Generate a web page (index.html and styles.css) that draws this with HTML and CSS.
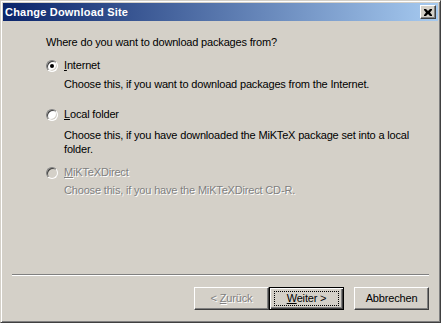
FILE: index.html
```html
<!DOCTYPE html>
<html lang="en">
<head>
    <meta charset="UTF-8">
    <title>Change Download Site</title>
    <link rel="stylesheet" href="styles.css">
</head>
<body>
<div class="window">
    <div class="titlebar">
        <span class="title">Change Download Site</span>
        <span class="close-btn">
            <svg width="8" height="7" viewBox="0 0 8 7">
                <path d="M0 0h2l2 2 2-2h2v1l-2 2.5 2 2.5v1h-2l-2-2-2 2h-2v-1l2-2.5-2-2.5z" fill="#000"/>
            </svg>
        </span>
    </div>

    <div class="content">
        <p class="question">Where do you want to download packages from?</p>

        <div class="option opt-internet">
            <div class="option-row">
                <span class="radio checked"></span>
                <span class="label"><u>I</u>nternet</span>
            </div>
            <p class="desc">Choose this, if you want to download packages from the Internet.</p>
        </div>

        <div class="option opt-local">
            <div class="option-row">
                <span class="radio"></span>
                <span class="label"><u>L</u>ocal folder</span>
            </div>
            <p class="desc">Choose this, if you have downloaded the MiKTeX package set into a local folder.</p>
        </div>

        <div class="option opt-direct disabled">
            <div class="option-row">
                <span class="radio"></span>
                <span class="label"><u>M</u>iKTeXDirect</span>
            </div>
            <p class="desc">Choose this, if you have the MiKTeXDirect CD-R.</p>
        </div>
    </div>

    <div class="footer">
        <div class="separator"></div>
        <div class="buttons">
            <span class="btn disabled"><span>&lt; <u>Z</u>urück</span></span>
            <span class="btn default"><span class="focus"><span><u>W</u>eiter &gt;</span></span></span>
            <span class="btn cancel">Abbrechen</span>
        </div>
    </div>
</div>
</body>
</html>
```

FILE: styles.css
```css
body, html {
    margin: 0;
    padding: 0;
    background: #d4d0c8;
}

.window {
    width: 441px;
    height: 323px;
    box-sizing: border-box;
    display: flex;
    flex-direction: column;
    background: #d4d0c8;
    border: 1px solid;
    border-color: #d4d0c8 #404040 #404040 #d4d0c8;
    box-shadow: inset 1px 1px #fff, inset -1px -1px #808080;
    padding: 2px;
    font-family: "Liberation Sans", Arial, sans-serif;
    font-size: 11px;
    line-height: 13px;
    letter-spacing: -0.17px;
    color: #000;
}

.titlebar {
    height: 18px;
    display: flex;
    align-items: center;
    justify-content: space-between;
    padding: 0 2px 0 2px;
    background: linear-gradient(to right, #0a246a, #a6caf0);
}

.title {
    color: #fff;
    font-weight: bold;
    font-size: 11px;
    letter-spacing: 0.2px;
}

.close-btn {
    width: 16px;
    height: 14px;
    box-sizing: border-box;
    display: flex;
    align-items: center;
    justify-content: center;
    background: #d4d0c8;
    border: 1px solid;
    border-color: #fff #404040 #404040 #fff;
    box-shadow: inset -1px -1px #808080;
}

.content {
    flex: 1;
    padding: 15px 0 0 43px;
}

.question {
    margin: 0 0 10px;
}

.option-row {
    display: flex;
    align-items: center;
    height: 13px;
}

.radio {
    width: 12px;
    height: 12px;
    box-sizing: border-box;
    border-radius: 50%;
    border: 1px solid;
    border-color: #808080 #fff #fff #808080;
    box-shadow: inset 1px 1px #404040, inset -1px -1px #d4d0c8;
    background: #fff;
    display: flex;
    align-items: center;
    justify-content: center;
    margin-right: 6px;
}

.radio.checked::after {
    content: "";
    width: 4px;
    height: 4px;
    border-radius: 50%;
    background: #000;
}

.label u, .btn u {
    text-decoration-thickness: 1px;
    text-underline-offset: 1px;
}

.desc {
    margin: 6px 0 0 18px;
    width: 360px;
}

.opt-internet { margin-bottom: 17px; }
.opt-local { margin-bottom: 10px; }
.opt-local .desc { margin-top: 7px; line-height: 14px; }
.opt-direct .desc { margin-top: 5px; }

.disabled .radio {
    background: #d4d0c8;
}

.disabled .label,
.disabled .desc,
.btn.disabled {
    color: #808080;
    text-shadow: 1px 1px #fff;
}

.footer {
    padding: 0 9px 10px 9px;
}

.separator {
    height: 1px;
    border-top: 1px solid #808080;
    background: #fff;
    margin-bottom: 11px;
}

.buttons {
    display: flex;
    justify-content: flex-end;
}

.btn {
    width: 75px;
    height: 23px;
    box-sizing: border-box;
    display: flex;
    align-items: center;
    justify-content: center;
    border: 1px solid;
    border-color: #fff #404040 #404040 #fff;
    box-shadow: inset -1px -1px #808080;
}

.btn.default {
    border: 1px solid #000;
    box-shadow: inset 1px 1px #fff, inset -1px -1px #404040, inset -2px -2px #808080;
}

.btn .focus {
    width: 63px;
    height: 13px;
    display: flex;
    align-items: center;
    justify-content: center;
    outline: 1px dotted #000;
    outline-offset: 0;
}

.btn.cancel {
    margin-left: 10px;
}
```
